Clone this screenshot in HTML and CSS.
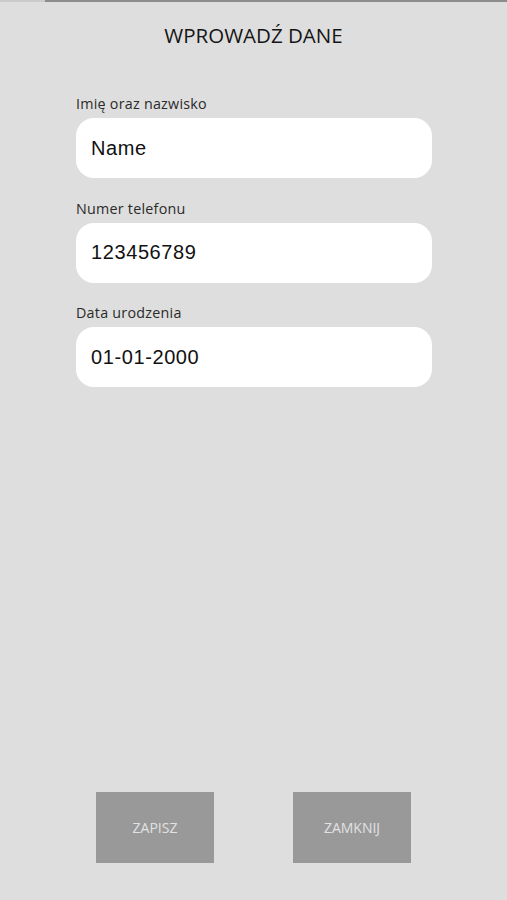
FILE: index.html
```html
<!DOCTYPE html>
<html lang="pl">
<head>
<meta charset="utf-8">
<title>Wprowadź dane</title>
<link rel="stylesheet" href="styles.css">
</head>
<body>
<div class="page">
  <div class="topbar"><span class="topbar-left"></span><span class="topbar-right"></span></div>
  <h1 class="title">WPROWADŹ DANE</h1>
  <form class="form">
    <label class="group">
      <span class="label">Imię oraz nazwisko</span>
      <input class="field" type="text" value="Name">
    </label>
    <label class="group">
      <span class="label">Numer telefonu</span>
      <input class="field" type="text" value="123456789">
    </label>
    <label class="group">
      <span class="label">Data urodzenia</span>
      <input class="field" type="text" value="01-01-2000">
    </label>
  </form>
  <div class="actions">
    <button class="btn" type="button">ZAPISZ</button>
    <button class="btn" type="button">ZAMKNIJ</button>
  </div>
</div>
</body>
</html>
```
FILE: styles.css
```css
* { box-sizing: border-box; }
html, body { margin: 0; padding: 0; }
body {
  background: #dedede;
  font-family: "Open Sans", "Noto Sans", sans-serif;
  color: #111;
}
.page {
  min-height: 100vh;
  display: flex;
  flex-direction: column;
}
.topbar {
  display: flex;
  height: 2px;
}
.topbar-left {
  width: 45px;
  background: #cbcbcb;
}
.topbar-right {
  flex: 1;
  background: #8c8c8c;
}
.title {
  margin: 19px 0 0;
  text-align: center;
  font-size: 20.5px;
  font-weight: 400;
  line-height: 29px;
  color: #151515;
}
.form {
  flex: 1;
  display: flex;
  flex-direction: column;
  gap: 20.5px;
  padding: 44px 0 0 76px;
}
.group {
  display: flex;
  flex-direction: column;
  gap: 5px;
  width: 356px;
}
.label {
  font-size: 14.3px;
  line-height: 19px;
  letter-spacing: 0.25px;
  color: #2a2a2a;
}
.field {
  height: 60px;
  border: none;
  outline: none;
  border-radius: 18px;
  background: #ffffff;
  padding: 0 15px;
  font-family: "Liberation Sans", Arial, sans-serif;
  font-size: 20px;
  letter-spacing: 0.6px;
  color: #111;
}
.actions {
  display: flex;
  justify-content: center;
  gap: 79px;
  padding: 0 0 37px 0;
}
.btn {
  width: 118px;
  height: 71px;
  border: none;
  background: #999999;
  color: #e2e2e2;
  font-family: "Open Sans", "Noto Sans", sans-serif;
  font-size: 14px;
  padding: 0;
}
```
